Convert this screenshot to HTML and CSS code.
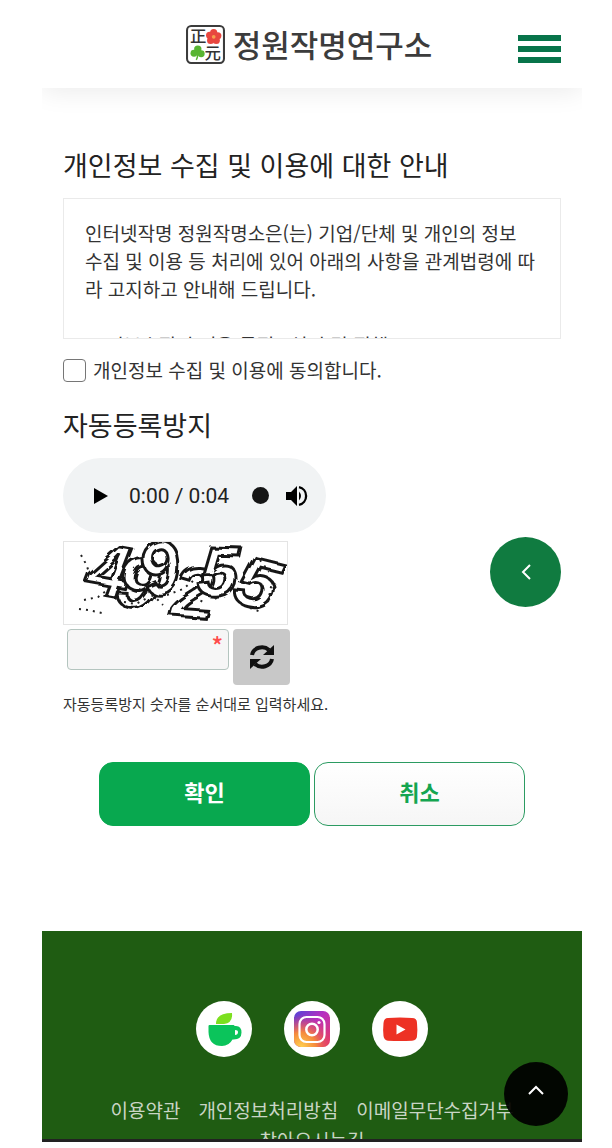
FILE: index.html
```html
<!DOCTYPE html>
<html lang="ko">
<head>
<meta charset="utf-8">
<meta name="viewport" content="width=device-width, initial-scale=1">
<title>정원작명연구소</title>
<link rel="stylesheet" href="styles.css">
</head>
<body>
<div class="screen">
  <header class="header">
    <a class="logo" href="#">
      <svg class="logo-mark" viewBox="0 0 38 38" aria-hidden="true">
        <rect x="1" y="1" width="36" height="36" rx="4" fill="#fff" stroke="#3c3c3c" stroke-width="2"/>
        <text class="logo-hanja" x="4" y="17">正</text>
        <text class="logo-hanja" x="18" y="33">元</text>
        <g fill="#e8473f">
          <circle cx="27" cy="7.500" r="3.500"/><circle cx="31" cy="10.500" r="3.500"/><circle cx="29.500" cy="15" r="3.500"/><circle cx="24" cy="15" r="3.500"/><circle cx="23" cy="10" r="3.500"/>
        </g>
        <circle cx="27" cy="11.500" r="1.800" fill="#f6a04d"/>
        <g fill="#58b530">
          <circle cx="11.500" cy="23.500" r="3.600"/><circle cx="7.800" cy="27.500" r="3.400"/><circle cx="14.800" cy="28" r="3.400"/>
        </g>
        <path d="M11 26q1 5-1 8" fill="none" stroke="#58b530" stroke-width="1.500"/>
      </svg>
      <span class="logo-name">정원작명연구소</span>
    </a>
    <button class="menu" type="button" aria-label="메뉴"><span></span><span></span><span></span></button>
  </header>

  <main class="main">
    <form class="form">
      <h2 class="title">개인정보 수집 및 이용에 대한 안내</h2>
      <div class="policy">
        인터넷작명 정원작명소은(는) 기업/단체 및 개인의 정보<br>수집 및 이용 등 처리에 있어 아래의 사항을 관계법령에 따<br>라 고지하고 안내해 드립니다.<br><br>1. 정보수집의 이용 목적 : 설정 및 집행
      </div>
      <label class="agree"><input class="check" type="checkbox"><span>개인정보 수집 및 이용에 동의합니다.</span></label>

      <h2 class="title">자동등록방지</h2>
      <div class="player">
        <button class="player-btn" type="button" aria-label="재생">
          <svg width="16" height="18" viewBox="0 0 16 18"><path d="M1 1l14 8-14 8z"/></svg>
        </button>
        <span class="time">0:00 / 0:04</span>
        <span class="knob"></span>
        <button class="player-btn" type="button" aria-label="음량">
          <svg width="22" height="22" viewBox="0 0 22 22"><path d="M0 7h5l6-6v20l-6-6H0z"/><path d="M13 6.500q4 4.500 0 9z"/><path d="M13 2.200a9 9 0 0 1 0 17.600" fill="none" stroke="#000" stroke-width="2.300"/></svg>
        </button>
      </div>

      <svg class="captcha" viewBox="0 0 223 82" role="img" aria-label="자동등록방지 숫자 이미지">
        <defs>
          <filter id="rough" x="-10%" y="-20%" width="120%" height="140%">
            <feTurbulence type="fractalNoise" baseFrequency="0.03" numOctaves="3" seed="8" result="n"/>
            <feDisplacementMap in="SourceGraphic" in2="n" scale="10"/>
          </filter>
        </defs>
        <g class="captcha-digits" filter="url(#rough)">
          <text transform="translate(22 50) rotate(10)">4</text>
          <text transform="translate(48 60) rotate(14)">9</text>
          <text transform="translate(82 54) rotate(-14)">9</text>
          <text transform="translate(108 74) rotate(4)">2</text>
          <text transform="translate(134 54) rotate(2)">5</text>
          <text transform="translate(168 60) rotate(14)">5</text>
        </g>
        <g class="captcha-noise">
          <path d="M17 13l5 9 3 8M20 58l14-3 8-6M15 67l9 1 14 3M60 60l12 2 11-6M75 47l16 8 8 8M103 53l16-6 10-8M130 56l12 5M151 57l12-8M186 66l11 4M204 60l4-20M196 18l9 12"/>
        </g>
      </svg>

      <div class="entry">
        <label class="field"><input class="code" type="text" aria-label="자동등록방지 숫자"><span class="required">*</span></label>
        <button class="refresh" type="button" aria-label="새로고침">
          <svg width="26" height="26" viewBox="0 0 26 26"><path d="M3 11a10 9 0 0 1 17-5" fill="none" stroke="#111" stroke-width="4"/><path d="M25 1v10H14z" fill="#111"/><path d="M23 15a10 9 0 0 1-17 5" fill="none" stroke="#111" stroke-width="4"/><path d="M1 25V15h11z" fill="#111"/></svg>
        </button>
      </div>
      <p class="hint">자동등록방지 숫자를 순서대로 입력하세요.</p>

      <div class="actions">
        <button class="btn btn-ok" type="button">확인</button>
        <button class="btn btn-cancel" type="button">취소</button>
      </div>
    </form>
  </main>

  <footer class="footer">
    <div class="social">
      <a class="social-link" href="#" aria-label="카페">
        <svg viewBox="0 0 56 56"><path d="M20 23q0-11 16-11 1 10-8 11z" fill="#7ce01f"/><path d="M12.500 25q0-1 1-1h24q1 0 1 1 7-1 7 6.500t-9 7Q33 45 26 45q-13 0-13.500-14z" fill="#0bc45b"/><path d="M39 29v5q3 0 3-3 0-2-3-2z" fill="#fff"/></svg>
      </a>
      <a class="social-link" href="#" aria-label="인스타그램">
        <svg viewBox="0 0 56 56">
          <defs>
            <linearGradient id="ig" x1="0" y1="0" x2="1" y2="1"><stop offset="0" stop-color="#5145d8"/><stop offset=".45" stop-color="#b72fc0"/><stop offset="1" stop-color="#e83a62"/></linearGradient>
            <radialGradient id="warm" cx=".2" cy="1" r=".9"><stop offset="0" stop-color="#ffd04f"/><stop offset=".45" stop-color="#f58a3c"/><stop offset="1" stop-color="#e63c5c" stop-opacity="0"/></radialGradient>
          </defs>
          <rect x="10" y="10" width="36" height="36" rx="7" fill="url(#ig)"/><rect x="10" y="10" width="36" height="36" rx="7" fill="url(#warm)"/>
          <g fill="none" stroke="#fff"><rect x="15.500" y="16" width="25" height="25" rx="7" stroke-width="2.200"/><circle cx="28" cy="28.500" r="5.700" stroke-width="2.500"/></g><circle cx="35" cy="21.500" r="1.600" fill="#fff"/>
        </svg>
      </a>
      <a class="social-link" href="#" aria-label="유튜브">
        <svg viewBox="0 0 56 56"><path d="M16 17q12-1 24 0 5 0 5 5 .7 6.500 0 13 0 4-5 4.700-12 .8-24 0-4-.7-4.500-4.700-.7-6.500 0-13 .5-5 4.500-5z" fill="#ed3124"/><path d="M24.500 23.500l9 5-9 5z" fill="#fff"/></svg>
      </a>
    </div>
    <nav class="links">
      <a href="#">이용약관</a>
      <a href="#">개인정보처리방침</a>
      <a href="#">이메일무단수집거부</a>
      <a href="#">찾아오시는길</a>
    </nav>
  </footer>

  <button class="float side" type="button" aria-label="열기"><svg width="12" height="18" viewBox="0 0 12 18"><path d="M10 2L3 9l7 7"/></svg></button>
  <button class="float top" type="button" aria-label="맨 위로"><svg width="18" height="12" viewBox="0 0 18 12"><path d="M2 10l7-7 7 7"/></svg></button>
</div>
</body>
</html>
```
FILE: styles.css
```css
* {
  box-sizing: border-box;
}

body {
  margin: 0;
  background: #fff;
  color: #333;
  font-family: "Noto Sans CJK KR", sans-serif;
  font-size: 19px;
  line-height: 28px;
}

button,
input {
  font: inherit;
}

button {
  padding: 0;
  border: 0;
  cursor: pointer;
}

a {
  color: inherit;
  text-decoration: none;
}

svg {
  display: block;
}

.screen {
  position: relative;
  height: calc(100vh - 6px);
  margin: 0 30px 0 42px;
  overflow: hidden;
  border-bottom: 3px solid #222;
}

.header {
  display: grid;
  grid-template-columns: 1fr auto 1fr;
  align-items: center;
  height: 88px;
  padding: 0 21px 0 15px;
  box-shadow: 0 4px 24px rgba(0, 0, 0, 0.08);
}

.logo {
  display: flex;
  grid-column: 2;
  align-items: center;
  gap: 8px;
}

.logo-mark {
  width: 39px;
  height: 39px;
}

.logo-hanja {
  fill: #333;
  font-size: 16px;
  font-weight: 500;
}

.logo-name {
  color: #3c3c3c;
  font-size: 31px;
  font-weight: 500;
  line-height: 40px;
}

.menu {
  display: grid;
  justify-self: end;
  width: 43px;
  margin-top: 10px;
  gap: 5px;
  background: none;
}

.menu span {
  height: 6px;
  background: #07744a;
}

.main {
  padding: 56px 21px 0;
}

.title {
  margin: 0 0 12px;
  color: #222;
  font-size: 27px;
  font-weight: 400;
  line-height: 42px;
}

.policy {
  height: 141px;
  padding: 20px 0 20px 21px;
  overflow: hidden;
  border: 1px solid #eaeaea;
}

.agree {
  display: flex;
  align-items: center;
  gap: 7px;
  margin: 17px 0 20px;
}

.check {
  width: 23px;
  height: 23px;
  margin: 0;
  border: 1px solid #767676;
  border-radius: 4px;
  appearance: none;
}

.player {
  display: flex;
  align-items: center;
  width: 263px;
  height: 75px;
  padding: 0 18px 0 30px;
  border-radius: 38px;
  background: #f1f3f4;
}

.player-btn {
  background: none;
}

.time {
  flex: 1;
  padding-left: 20px;
  color: #222;
  font-family: Roboto, sans-serif;
  font-size: 21px;
}

.knob {
  width: 17px;
  height: 17px;
  margin-right: 17px;
  border-radius: 50%;
  background: #151515;
}

.captcha {
  width: 225px;
  height: 84px;
  margin: 8px 0 4px;
  border: 1px solid #e4e4e4;
}

.captcha-digits {
  fill: #fff;
  stroke: #151515;
  stroke-width: 3;
  font-family: "Liberation Sans", sans-serif;
  font-size: 72px;
  font-style: italic;
  font-weight: 700;
}

.captcha-noise {
  fill: none;
  stroke: #222;
  stroke-width: 2;
  stroke-dasharray: 2 5;
}

.entry {
  display: flex;
  align-items: flex-start;
  gap: 4px;
  padding-left: 4px;
}

.field {
  position: relative;
  width: 162px;
}

.code {
  display: block;
  width: 100%;
  height: 41px;
  padding: 0 24px 0 8px;
  border: 1px solid #b4c5bf;
  border-radius: 4px;
  background: #f6f6f6;
}

.required {
  position: absolute;
  top: 4px;
  right: 6px;
  color: #ff4b4b;
  font-size: 24px;
  font-weight: 500;
  line-height: 24px;
}

.refresh {
  display: grid;
  place-items: center;
  width: 57px;
  height: 56px;
  border-radius: 4px;
  background: #c8c8c8;
}

.hint {
  margin: 5px 0 0;
  font-size: 15px;
}

.actions {
  display: flex;
  justify-content: center;
  gap: 4px;
  margin: 44px 36px 0;
}

.btn {
  flex: 1;
  height: 64px;
  padding-bottom: 6px;
  border: 1px solid #08a84f;
  border-radius: 14px;
  font-size: 22px;
  font-weight: 700;
}

.btn-ok {
  background: #08a84f;
  color: #fff;
}

.btn-cancel {
  border-color: #2c9b62;
  background: linear-gradient(#fff, #f6f6f6);
  color: #14a550;
}

.footer {
  margin-top: 105px;
  padding: 70px 60px 40px;
  background: #1f5c12;
}

.social {
  display: flex;
  justify-content: center;
  gap: 32px;
}

.social-link {
  width: 56px;
  height: 56px;
  overflow: hidden;
  border-radius: 50%;
  background: #fff;
}

.links {
  display: flex;
  flex-wrap: wrap;
  justify-content: center;
  gap: 0 18px;
  margin-top: 38px;
  color: #c9d5c5;
  line-height: 30px;
}

.float {
  position: absolute;
  display: grid;
  place-items: center;
  border-radius: 50%;
}

.float path {
  fill: none;
  stroke: #fff;
  stroke-width: 2;
}

.side {
  right: 21px;
  bottom: 532px;
  width: 71px;
  height: 70px;
  background: #107b40;
}

.top {
  right: 14px;
  bottom: 13px;
  width: 64px;
  height: 64px;
  padding-bottom: 8px;
  background: rgba(0, 0, 0, 0.93);
}
```
